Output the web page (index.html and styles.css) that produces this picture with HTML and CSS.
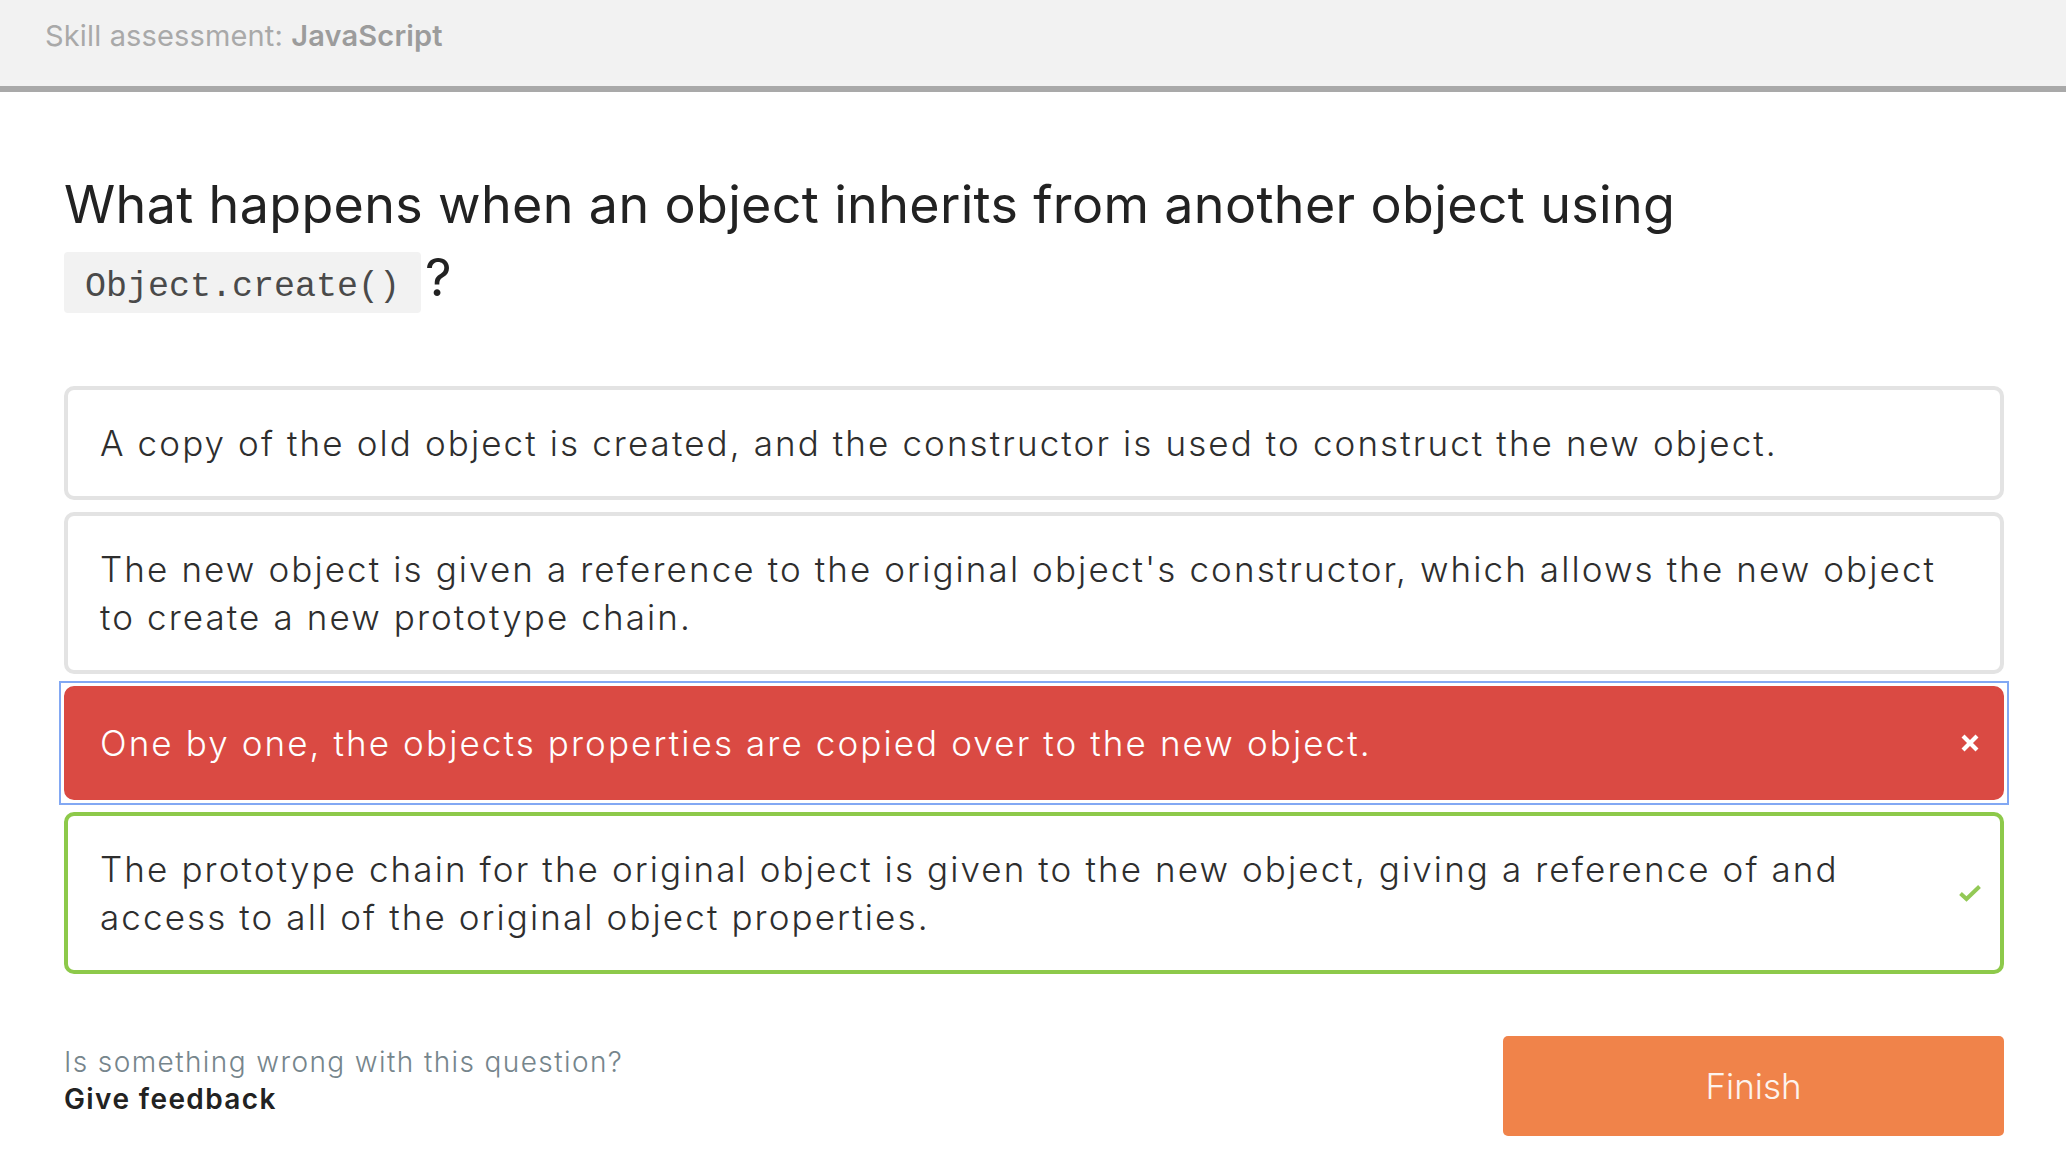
FILE: index.html
```html
<!DOCTYPE html>
<html lang="en">
<head>
<meta charset="utf-8">
<title>Skill assessment: JavaScript</title>
<link rel="stylesheet" href="styles.css">
</head>
<body>
<header class="topbar">
  <span class="topbar-label">Skill assessment: <strong class="topbar-skill">JavaScript</strong></span>
</header>
<main class="page">
  <h1 class="question">What happens when an object inherits from another object using <code class="code">Object.create()</code>?</h1>
  <ul class="options">
    <li class="option">
      <span class="option-text">A copy of the old object is created, and the constructor is used to construct the new object.</span>
      <span class="option-icon"></span>
    </li>
    <li class="option">
      <span class="option-text">The new object is given a reference to the original object's constructor, which allows the new object to create a new prototype chain.</span>
      <span class="option-icon"></span>
    </li>
    <li class="option option-wrong">
      <span class="option-text">One by one, the objects properties are copied over to the new object.</span>
      <span class="option-icon">
        <svg class="icon" width="18" height="18" viewBox="0 0 18 18"><path d="M3.5 3.5 L14.5 14.5 M14.5 3.5 L3.5 14.5" stroke="#ffffff" stroke-width="4.2" stroke-linecap="square" fill="none"/></svg>
      </span>
    </li>
    <li class="option option-right">
      <span class="option-text">The prototype chain for the original object is given to the new object, giving a reference of and access to all of the original object properties.</span>
      <span class="option-icon">
        <svg class="icon" width="26" height="20" viewBox="0 0 26 20"><path d="M3.5 10.5 L9.5 16 L22.5 3.5" stroke="#93c956" stroke-width="4" fill="none" stroke-linejoin="miter"/></svg>
      </span>
    </li>
  </ul>
  <footer class="footer">
    <div class="feedback">
      <div class="feedback-q">Is something wrong with this question?</div>
      <div class="feedback-link">Give feedback</div>
    </div>
    <button class="finish">Finish</button>
  </footer>
</main>
</body>
</html>
```
FILE: styles.css
```css
* { box-sizing: border-box; }
html, body { margin: 0; padding: 0; background: #ffffff; }
body {
  font-family: Inter, Lato, "Noto Sans", sans-serif;
  color: #2b2b2b;
}
.topbar {
  height: 92px;
  background: #f2f2f2;
  border-bottom: 6px solid #a9a9a9;
  padding: 18px 0 0 45px;
}
.topbar-label {
  font-size: 29px;
  line-height: 35px;
  letter-spacing: 0.15px;
  color: #a9a9a9;
}
.topbar-skill { font-weight: 600; color: #9c9c9c; }
.page { padding: 0 62px 0 64px; }
.question {
  margin: 76px 0 0 0;
  font-size: 52px;
  line-height: 73px;
  font-weight: 400;
  letter-spacing: 0.35px;
  color: #222222;
}
.code {
  display: inline-block;
  font-family: "Liberation Mono", monospace;
  font-size: 35px;
  line-height: 41px;
  letter-spacing: 0;
  color: #4a4a4a;
  font-weight: 400;
  background: #f2f2f2;
  border-radius: 4px;
  padding: 15px 21px 5px 21px;
  margin-right: 4px;
}
.options {
  list-style: none;
  margin: 72px 0 0 0;
  padding: 0;
  display: flex;
  flex-direction: column;
  gap: 12px;
}
.option {
  position: relative;
  display: flex;
  align-items: center;
  border: 4px solid #e3e3e3;
  border-radius: 10px;
  padding: 29px 22px 29px 32px;
  font-size: 35px;
  line-height: 48px;
  font-weight: 300;
  letter-spacing: 2.1px;
  color: #2e2e2e;
}
.option-text { flex: 1; }
.option-icon {
  flex: none;
  width: 16px;
  margin-left: 10px;
  display: flex;
  justify-content: center;
  align-items: center;
}
.icon { flex: none; display: block; }
.option-wrong {
  background: #da4a43;
  border-color: #da4a43;
  color: #ffffff;
}
.option-wrong::before {
  content: "";
  position: absolute;
  top: -9px; left: -9px; right: -9px; bottom: -9px;
  border: 2px solid #82a8f3;
}
.option-right { border-color: #8dc94a; }
.footer {
  margin-top: 62px;
  display: flex;
  justify-content: space-between;
  align-items: flex-start;
}
.feedback { padding-top: 8px; font-size: 28px; line-height: 37px; }
.feedback-q { color: #76858c; font-weight: 300; letter-spacing: 1.4px; }
.feedback-link { font-weight: 600; color: #222222; letter-spacing: 1.4px; }
.finish {
  width: 501px;
  height: 100px;
  border: none;
  border-radius: 5px;
  background: #f0834a;
  color: #fdf3ee;
  font-family: Inter, Lato, sans-serif;
  font-size: 35px;
  font-weight: 300;
  letter-spacing: 0;
  cursor: pointer;
}
```
